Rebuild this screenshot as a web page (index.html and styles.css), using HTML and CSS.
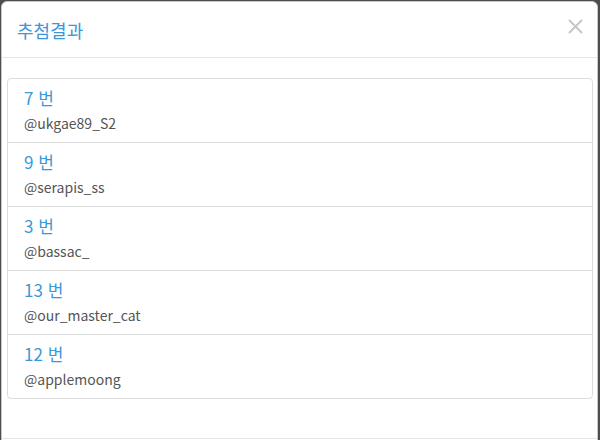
FILE: index.html
```html
<!DOCTYPE html>
<html lang="ko">
<head>
<meta charset="utf-8">
<link rel="stylesheet" href="styles.css">
</head>
<body>
<div class="modal">
  <div class="modal-header">
    <h4 class="modal-title">추첨결과</h4>
    <span class="close" aria-label="닫기"><svg width="15" height="15" viewBox="0 0 15 15"><path d="M1 1L14 14M14 1L1 14" stroke="#c6c6c6" stroke-width="2" fill="none"/></svg></span>
  </div>
  <div class="modal-body">
    <ul class="list">
      <li class="item"><div class="num">7 번</div><div class="user">@ukgae89_S2</div></li>
      <li class="item"><div class="num">9 번</div><div class="user">@serapis_ss</div></li>
      <li class="item"><div class="num">3 번</div><div class="user">@bassac_</div></li>
      <li class="item"><div class="num">13 번</div><div class="user">@our_master_cat</div></li>
      <li class="item"><div class="num">12 번</div><div class="user">@applemoong</div></li>
    </ul>
  </div>
  <div class="modal-footer"></div>
</div>
</body>
</html>
```
FILE: styles.css
```css
html, body {
  margin: 0;
  padding: 0;
  height: 100%;
  overflow: hidden;
}
body {
  background: #4d4d4d;
  font-family: "Noto Sans", "Noto Sans CJK KR", sans-serif;
  padding: 1px 0 0 1px;
  box-sizing: border-box;
}
.modal {
  width: 597px;
  background: #fff;
  border: 1px solid #c8c8c8;
  border-radius: 6px;
  height: 600px;
  box-sizing: border-box;
}
.modal-header {
  display: flex;
  align-items: center;
  justify-content: space-between;
  height: 55px;
  padding: 0 15px;
  border-bottom: 1px solid #e5e5e5;
}
.modal-title {
  margin: 0;
  font-size: 18px;
  font-weight: normal;
  color: #3a98d8;
  font-family: "Noto Sans CJK KR", sans-serif;
}
.close {
  display: flex;
  margin-right: -1px;
  margin-top: -6px;
}
.modal-body {
  padding: 20px 4px 0 5px;
}
.list {
  list-style: none;
  margin: 0;
  padding: 0;
  border: 1px solid #dcdcdc;
  border-radius: 4px;
}
.item {
  height: 64px;
  padding: 7px 16px 0;
  box-sizing: border-box;
  border-bottom: 1px solid #dcdcdc;
}
.item:last-child {
  border-bottom: none;
  height: 63px;
}
.num {
  font-size: 17px;
  line-height: 24px;
  color: #3a98d8;
  font-family: "Noto Sans CJK KR", sans-serif;
}
.user {
  font-size: 14px;
  line-height: 22px;
  color: #555;
  font-family: "Noto Sans CJK KR", sans-serif;
  margin-top: 2px;
}
.modal-footer {
  margin-top: 39px;
  border-top: 1px solid #e5e5e5;
}
```
